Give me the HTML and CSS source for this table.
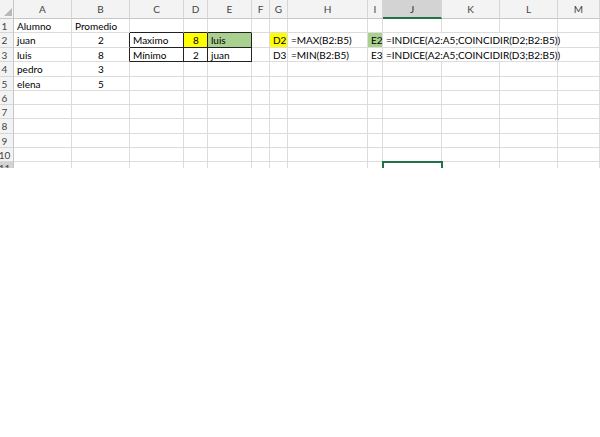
FILE: index.html
```html
<!DOCTYPE html>
<html lang="es">
<head>
    <meta charset="UTF-8">
    <title>Hoja de cálculo - Alumnos</title>
    <link rel="stylesheet" href="styles.css">
</head>
<body>

    <!-- Hoja: encabezados + filas 1 a 11 -->
    <div class="sheet">
        <!-- Encabezado de columnas -->
        <div class="corner"><span class="corner-tri"></span></div>
        <div class="col-head">A</div>
        <div class="col-head">B</div>
        <div class="col-head">C</div>
        <div class="col-head">D</div>
        <div class="col-head">E</div>
        <div class="col-head">F</div>
        <div class="col-head">G</div>
        <div class="col-head">H</div>
        <div class="col-head">I</div>
        <div class="col-head active">J</div>
        <div class="col-head">K</div>
        <div class="col-head">L</div>
        <div class="col-head">M</div>

        <!-- Fila 1 -->
        <div class="row-head">1</div>
        <div class="cell">Alumno</div>
        <div class="cell">Promedio</div>
        <div class="cell box-top"></div>
        <div class="cell box-top"></div>
        <div class="cell box-top"></div>
        <div class="cell"></div>
        <div class="cell"></div>
        <div class="cell"></div>
        <div class="cell"></div>
        <div class="cell"></div>
        <div class="cell"></div>
        <div class="cell"></div>
        <div class="cell"></div>

        <!-- Fila 2 -->
        <div class="row-head">2</div>
        <div class="cell">juan</div>
        <div class="cell num box-left">2</div>
        <div class="cell box">Maximo</div>
        <div class="cell num box yellow">8</div>
        <div class="cell box green">luis</div>
        <div class="cell"></div>
        <div class="cell yellow">D2</div>
        <div class="cell">=MAX(B2:B5)</div>
        <div class="cell green">E2</div>
        <div class="cell span3">=INDICE(A2:A5;COINCIDIR(D2;B2:B5))</div>
        <div class="cell"></div>

        <!-- Fila 3 -->
        <div class="row-head">3</div>
        <div class="cell">luis</div>
        <div class="cell num box-left">8</div>
        <div class="cell box">Mínimo</div>
        <div class="cell num box">2</div>
        <div class="cell box">juan</div>
        <div class="cell"></div>
        <div class="cell">D3</div>
        <div class="cell">=MIN(B2:B5)</div>
        <div class="cell">E3</div>
        <div class="cell span3">=INDICE(A2:A5;COINCIDIR(D3;B2:B5))</div>
        <div class="cell"></div>

        <!-- Fila 4 -->
        <div class="row-head">4</div>
        <div class="cell">pedro</div>
        <div class="cell num">3</div>
        <div class="cell"></div><div class="cell"></div><div class="cell"></div>
        <div class="cell"></div><div class="cell"></div><div class="cell"></div>
        <div class="cell"></div><div class="cell"></div><div class="cell"></div>
        <div class="cell"></div><div class="cell"></div>

        <!-- Fila 5 -->
        <div class="row-head">5</div>
        <div class="cell">elena</div>
        <div class="cell num">5</div>
        <div class="cell"></div><div class="cell"></div><div class="cell"></div>
        <div class="cell"></div><div class="cell"></div><div class="cell"></div>
        <div class="cell"></div><div class="cell"></div><div class="cell"></div>
        <div class="cell"></div><div class="cell"></div>

        <!-- Filas vacías 6 a 10 -->
        <div class="row-head">6</div>
        <div class="cell"></div><div class="cell"></div><div class="cell"></div><div class="cell"></div>
        <div class="cell"></div><div class="cell"></div><div class="cell"></div><div class="cell"></div>
        <div class="cell"></div><div class="cell"></div><div class="cell"></div><div class="cell"></div>
        <div class="cell"></div>

        <div class="row-head">7</div>
        <div class="cell"></div><div class="cell"></div><div class="cell"></div><div class="cell"></div>
        <div class="cell"></div><div class="cell"></div><div class="cell"></div><div class="cell"></div>
        <div class="cell"></div><div class="cell"></div><div class="cell"></div><div class="cell"></div>
        <div class="cell"></div>

        <div class="row-head">8</div>
        <div class="cell"></div><div class="cell"></div><div class="cell"></div><div class="cell"></div>
        <div class="cell"></div><div class="cell"></div><div class="cell"></div><div class="cell"></div>
        <div class="cell"></div><div class="cell"></div><div class="cell"></div><div class="cell"></div>
        <div class="cell"></div>

        <div class="row-head">9</div>
        <div class="cell"></div><div class="cell"></div><div class="cell"></div><div class="cell"></div>
        <div class="cell"></div><div class="cell"></div><div class="cell"></div><div class="cell"></div>
        <div class="cell"></div><div class="cell"></div><div class="cell"></div><div class="cell"></div>
        <div class="cell"></div>

        <div class="row-head">10</div>
        <div class="cell"></div><div class="cell"></div><div class="cell"></div><div class="cell"></div>
        <div class="cell"></div><div class="cell"></div><div class="cell"></div><div class="cell"></div>
        <div class="cell"></div><div class="cell"></div><div class="cell"></div><div class="cell"></div>
        <div class="cell"></div>

        <!-- Fila 11 (cortada), J11 seleccionada -->
        <div class="row-head active-row">11</div>
        <div class="cell"></div><div class="cell"></div><div class="cell"></div><div class="cell"></div>
        <div class="cell"></div><div class="cell"></div><div class="cell"></div><div class="cell"></div>
        <div class="cell"></div>
        <div class="cell selected"></div>
        <div class="cell"></div><div class="cell"></div><div class="cell"></div>
    </div>

</body>
</html>
```

FILE: styles.css
```css
/* Generel */
body {
    margin: 0;
    background: #fff;
    font-family: Lato, "Liberation Sans", sans-serif;
    color: #000;
}

/* Hoja: rejilla de columnas y filas */
.sheet {
    display: grid;
    grid-template-columns: 14px 58px 58px 54px 24px 44px 18px 18px 80px 15px 59px 58px 58px 1fr;
    grid-template-rows: 19px 14px 15px 14px 15px 14px 14px 14px 15px 14px 14px 14px;
    height: 168px;
    overflow: hidden;
}

/* Encabezados */
.corner,
.col-head,
.row-head {
    box-sizing: border-box;
    background: #f3f3f3;
    color: #444;
    font-size: 10px;
    display: flex;
    align-items: center;
    justify-content: center;
}

.corner {
    position: relative;
    border-right: 1px solid #c6c6c6;
    border-bottom: 1px solid #c6c6c6;
}

/* Triángulo de "seleccionar todo" */
.corner-tri {
    position: absolute;
    right: 1px;
    bottom: 2px;
    width: 0;
    height: 0;
    border-left: 8px solid transparent;
    border-bottom: 8px solid #b8b8b8;
}

.col-head {
    border-right: 1px solid #d6d6d6;
    border-bottom: 1px solid #c6c6c6;
}

.col-head.active {
    background: #d3d3d3;
    border-bottom: 2px solid #217346;
    color: #2b2b2b;
}

.row-head {
    border-right: 1px solid #c6c6c6;
    border-bottom: 1px solid #d6d6d6;
    padding-right: 4px;
}

.row-head.active-row {
    background: #d3d3d3;
    align-items: flex-start;
}

/* Celdas */
.cell {
    box-sizing: border-box;
    border-right: 1px solid #dcdcdc;
    border-bottom: 1px solid #dcdcdc;
    padding: 0 2px 0 3px;
    font-size: 10px;
    white-space: nowrap;
    overflow: visible;
    display: flex;
    align-items: center;
}

.cell.num {
    justify-content: center;
}

/* Fórmulas que se desbordan sobre K y L */
.cell.span3 {
    grid-column: span 3;
}

/* Recuadro Maximo / Mínimo */
.cell.box {
    border-right-color: #222;
    border-bottom-color: #222;
}

.cell.box-top {
    border-bottom-color: #222;
}

.cell.box-left {
    border-right-color: #222;
}

/* Rellenos */
.cell.yellow {
    background: #ffff00;
}

.cell.green {
    background: #a9d08e;
}

/* Celda activa J11 */
.cell.selected {
    position: relative;
    z-index: 1;
    outline: 2px solid #217346;
    outline-offset: -1px;
}
```
